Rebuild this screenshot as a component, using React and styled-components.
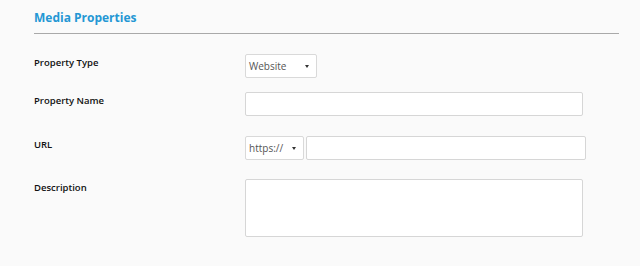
import React from "react";
import styled, { createGlobalStyle } from "styled-components";

const GlobalStyle = createGlobalStyle`
  html, body {
    margin: 0;
    padding: 0;
    background: #fafafa;
  }
  body {
    font-family: "Open Sans", "Liberation Sans", sans-serif;
  }
`;

const Page = styled.div`
  width: 640px;
  height: 266px;
  padding: 0 21px 0 34px;
  box-sizing: border-box;
  background: #fafafa;
`;

const Header = styled.div`
  padding-top: 9px;
  height: 24px;
  border-bottom: 1px solid #a9a9a9;
  font-size: 12px;
  font-weight: 700;
  color: #2497d4;
  line-height: 18px;
`;

const Form = styled.div`
  display: flex;
  flex-direction: column;
  padding-top: 20px;
`;

const Row = styled.div`
  display: grid;
  grid-template-columns: 211px 1fr;
  align-items: start;
  margin-top: ${p => p.$gap || 0}px;
`;

const Label = styled.div`
  font-size: 9.5px;
  font-weight: 600;
  color: #111;
  line-height: 12px;
  padding-top: 3px;
`;

const Controls = styled.div`
  display: flex;
  gap: 2px;
`;

const SelectBox = styled.div`
  width: ${p => p.$width}px;
  height: 24px;
  box-sizing: border-box;
  border: 1px solid #d9d9d9;
  border-radius: 2px;
  background: #fff;
  display: flex;
  align-items: center;
  justify-content: space-between;
  padding: 0 7px 0 3px;
  font-size: 10px;
  color: #555;
`;

const Caret = styled.span`
  width: 0;
  height: 0;
  border-left: 2.5px solid transparent;
  border-right: 2.5px solid transparent;
  border-top: 3px solid #333;
`;

const TextInput = styled.div`
  width: ${p => p.$width}px;
  height: ${p => p.$height || 24}px;
  box-sizing: border-box;
  border: 1px solid #d6d6d6;
  border-radius: 2px;
  background: #fff;
`;

function Select({ value, width }) {
  return (
    <SelectBox $width={width}>
      <span>{value}</span>
      <Caret />
    </SelectBox>
  );
}

export default function App() {
  return (
    <Page>
      <GlobalStyle />
      <Header>Media Properties</Header>
      <Form>
        <Row>
          <Label>Property Type</Label>
          <Controls>
            <Select value="Website" width={72} />
          </Controls>
        </Row>
        <Row $gap={14}>
          <Label>Property Name</Label>
          <Controls>
            <TextInput $width={338} />
          </Controls>
        </Row>
        <Row $gap={20}>
          <Label>URL</Label>
          <Controls>
            <Select value="https://" width={59} />
            <TextInput $width={280} />
          </Controls>
        </Row>
        <Row $gap={19}>
          <Label>Description</Label>
          <Controls>
            <TextInput $width={338} $height={58} />
          </Controls>
        </Row>
      </Form>
    </Page>
  );
}
